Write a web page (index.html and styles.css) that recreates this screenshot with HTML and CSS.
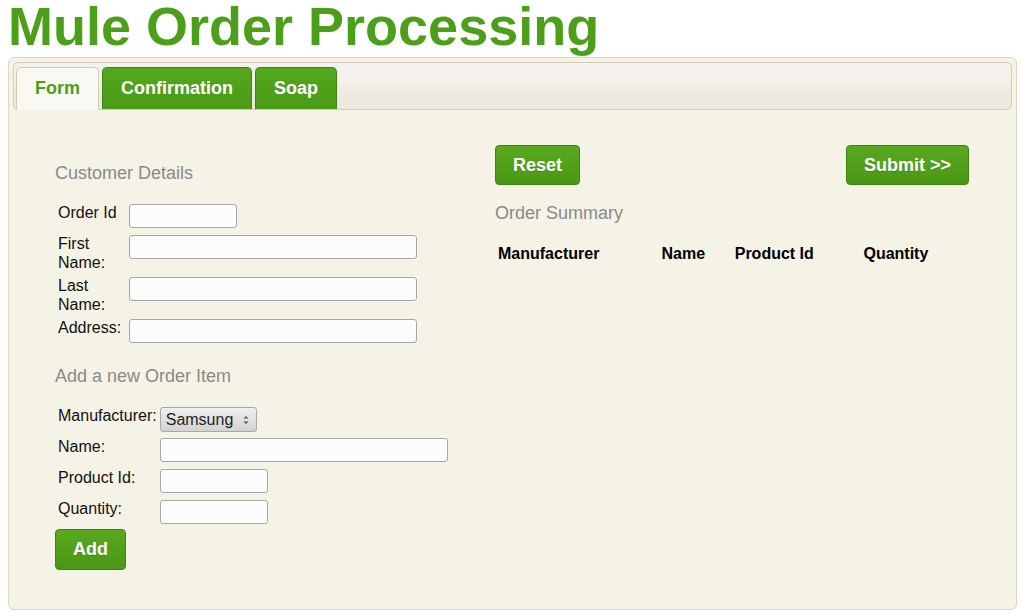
FILE: index.html
```html
<!DOCTYPE html>
<html>
<head>
<meta charset="utf-8">
<title>Mule Order Processing</title>
<link rel="stylesheet" href="styles.css">
</head>
<body>
<h1 class="title">Mule Order Processing</h1>
<div class="widget">
  <ul class="tabnav">
    <li class="tab active">Form</li>
    <li class="tab">Confirmation</li>
    <li class="tab">Soap</li>
  </ul>
  <div class="panel">
    <div class="col-left">
      <h3 class="section first">Customer Details</h3>
      <table class="form-table t1">
        <tr><td class="lbl">Order Id</td><td><input class="inp short" type="text"></td></tr>
        <tr><td class="lbl">First Name:</td><td><input class="inp long" type="text"></td></tr>
        <tr><td class="lbl">Last Name:</td><td><input class="inp long" type="text"></td></tr>
        <tr><td class="lbl">Address:</td><td><input class="inp long" type="text"></td></tr>
      </table>
      <h3 class="section">Add a new Order Item</h3>
      <table class="form-table t2">
        <tr><td class="lbl">Manufacturer:</td><td><span class="sel-wrap"><select class="sel"><option>Samsung</option><option>Nokia</option></select><svg class="sel-arrows" width="8" height="12" viewBox="0 0 8 12"><path d="M1.5 4.5 L4 2 L6.5 4.5 Z M1.5 7.5 L4 10 L6.5 7.5 Z" fill="#555"/></svg></span></td></tr>
        <tr><td class="lbl">Name:</td><td><input class="inp long" type="text"></td></tr>
        <tr><td class="lbl">Product Id:</td><td><input class="inp short" type="text"></td></tr>
        <tr><td class="lbl">Quantity:</td><td><input class="inp short" type="text"></td></tr>
      </table>
      <button class="btn">Add</button>
    </div>
    <div class="col-right">
      <div class="btn-row">
        <button class="btn">Reset</button>
        <button class="btn">Submit &gt;&gt;</button>
      </div>
      <h3 class="section">Order Summary</h3>
      <table class="summary">
        <tr><th>Manufacturer</th><th>Name</th><th>Product Id</th><th>Quantity</th></tr>
      </table>
    </div>
  </div>
</div>
</body>
</html>
```

FILE: styles.css
```css
html, body {
  margin: 0;
  padding: 0;
  background: #ffffff;
}
body {
  font-family: "Liberation Sans", Arial, sans-serif;
  color: #111;
}
.title {
  margin: 0 0 5px 8px;
  font-size: 54px;
  line-height: 52px;
  font-weight: bold;
  color: #4c9f18;
}
.widget {
  margin: 0 5px 0 8px;
  border: 1px solid #dcd6c2;
  border-radius: 6px;
  background: #f5f2e6;
  padding: 4px;
}
.tabnav {
  list-style: none;
  margin: 0;
  padding: 4px 2px 0;
  display: flex;
  gap: 3px;
  border: 1px solid #d5cdb3;
  border-radius: 5px;
  background: linear-gradient(#f4f2ec 0%, #f3f1ea 45%, #eeeadf 62%, #ece8dc 100%);
}
.tab {
  position: relative;
  margin-bottom: -1px;
  height: 41px;
  line-height: 40px;
  padding: 0 18px;
  font-size: 18px;
  font-weight: bold;
  color: #ffffff;
  border: 1px solid #3e8613;
  border-bottom: 0;
  border-radius: 5px 5px 0 0;
  background: linear-gradient(#55a71d, #4a9a15);
}
.tab.active {
  color: #4c9f18;
  background: #f9f8f2;
  border-color: #d5cdb3;
  height: 42px;
}
.panel {
  display: grid;
  grid-template-columns: 440px 474px;
  padding: 35px 0 35px 42px;
}
.section {
  margin: 17px 0 16px;
  font-size: 18px;
  line-height: 22px;
  font-weight: normal;
  color: #8a8a8a;
}
.section.first {
  margin-top: 17px;
}
.form-table {
  border-spacing: 2px;
}
.form-table td {
  padding: 1px;
  vertical-align: top;
  font-size: 16px;
  line-height: 19px;
}
.t1 .lbl {
  width: 67px;
}
.t2 .lbl {
  padding-right: 0;
}
.inp {
  display: block;
  box-sizing: border-box;
  height: 24px;
  margin: 1px 0 2px;
  padding: 2px 4px;
  border: 1px solid #a7a7a7;
  border-radius: 3px;
  background: #fcfcfc;
  font-family: inherit;
  font-size: 15px;
}
.inp.short { width: 108px; }
.inp.long { width: 288px; }
.sel-wrap {
  position: relative;
  display: block;
  width: 97px;
  margin: 1px 0 1px;
}
.sel {
  appearance: none;
  -webkit-appearance: none;
  display: block;
  box-sizing: border-box;
  width: 97px;
  height: 25px;
  padding: 0 0 0 5px;
  border: 1px solid #a9a9a9;
  border-radius: 3px;
  background: linear-gradient(#f0f0f0, #d2d2d2);
  font-family: inherit;
  font-size: 16px;
  color: #222;
}
.sel-arrows {
  position: absolute;
  right: 7px;
  top: 7px;
  pointer-events: none;
}
.btn {
  box-sizing: border-box;
  height: 40px;
  padding: 0 17px;
  border: 1px solid #3e8412;
  border-radius: 4px;
  background: linear-gradient(#59a920, #4a9714);
  color: #ffffff;
  font-family: inherit;
  font-size: 18px;
  font-weight: bold;
  text-shadow: 0 1px 0 rgba(0,0,0,0.15);
}
.col-left .btn {
  height: 41px;
}
.btn-row {
  display: flex;
  justify-content: space-between;
}
.col-right .section {
  margin-top: 17px;
  margin-bottom: 18px;
}
.summary {
  width: 100%;
  border-spacing: 2px;
}
.summary th {
  padding: 1px;
  text-align: left;
  font-size: 16px;
  font-weight: bold;
  color: #000;
}
```
